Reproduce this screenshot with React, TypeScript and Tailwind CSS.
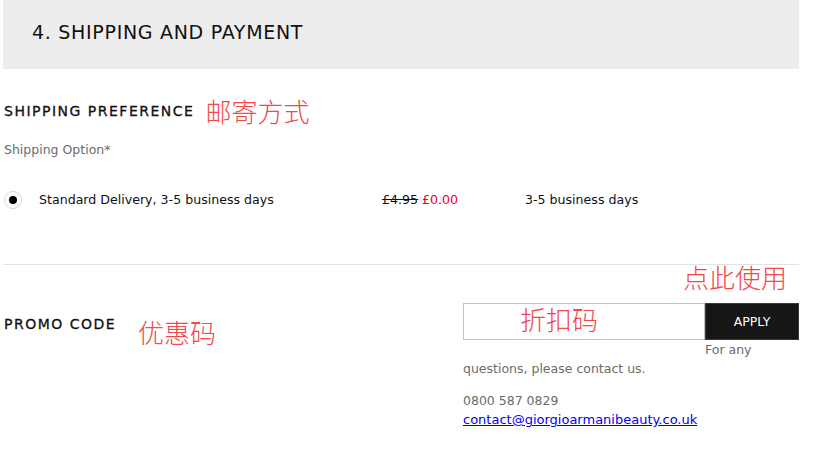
import React from 'react';

const note = "font-['Noto_Sans_CJK_SC',sans-serif] font-light text-[#f24848]";

export default function App() {
    return (
        <div className="relative w-[814px] h-[463px] bg-white text-[#111] font-['DejaVu_Sans',sans-serif] overflow-hidden">
            <div className="ml-[3px] w-[796px]">
                {/* Section header */}
                <div className="h-[69px] bg-[#ededed] pl-[29px] pt-[19px]">
                    <h2 className="text-[19px] leading-[26px] tracking-[0.7px] text-[#111]">4. SHIPPING AND PAYMENT</h2>
                </div>

                {/* Shipping preference */}
                <div className="pl-px pt-[27px] flex items-center">
                    <h3 className="text-[14px] tracking-[1.5px] font-medium [-webkit-text-stroke:0.3px_#111]">SHIPPING PREFERENCE</h3>
                    <span className={`${note} ml-[11px] text-[26px] leading-[30px]`}>邮寄方式</span>
                </div>
                <p className="pl-px mt-[16px] text-[12.5px] leading-[16px] text-[#6b6b6b]">Shipping Option*</p>

                <label className="mt-[33px] flex items-center text-[12.6px] leading-[18px]">
                    <span className="ml-px w-[18px] h-[18px] rounded-full border border-[#d6d6d6] flex items-center justify-center">
                        <span className="w-[8px] h-[8px] rounded-full bg-black" />
                    </span>
                    <span className="ml-[17px] w-[343px]">Standard Delivery, 3-5 business days</span>
                    <span className="w-[143px]">
                        <s>£4.95</s> <span className="text-[#e8001c]">£0.00</span>
                    </span>
                    <span>3-5 business days</span>
                </label>

                <hr className="mt-[55px] border-[#e2e2e2]" />

                {/* Promo code */}
                <div className="flex pt-[38px]">
                    <div className="w-[460px] pl-px">
                        <h3 className="text-[14px] tracking-[1.5px] font-medium [-webkit-text-stroke:0.3px_#111] leading-[18px] mt-[12px]">PROMO CODE</h3>
                    </div>
                    <div className="w-[336px] text-[12.5px] leading-[19px] text-[#6b6b6b]">
                        <div className="float-left w-[242px] h-[37px] mb-[10px] border border-[#c2c2c2]" />
                        <button className="float-left w-[94px] h-[37px] bg-[#161616] border border-[#3a3a3a] text-white text-[12.5px]">APPLY</button>
                        <p>For any questions, please contact us.</p>
                        <p className="mt-[13px]">0800 587 0829</p>
                        <a href="#" className="text-[13px] text-[#0000ee] underline">contact@giorgioarmanibeauty.co.uk</a>
                    </div>
                </div>
            </div>

            {/* red annotations */}
            <span className={`${note} absolute left-[683px] top-[261px] text-[26px] leading-[32px]`}>点此使用</span>
            <span className={`${note} absolute left-[520px] top-[303px] text-[26px] leading-[32px]`}>折扣码</span>
            <span className={`${note} absolute left-[138px] top-[316px] text-[26px] leading-[32px]`}>优惠码</span>
        </div>
    );
}
